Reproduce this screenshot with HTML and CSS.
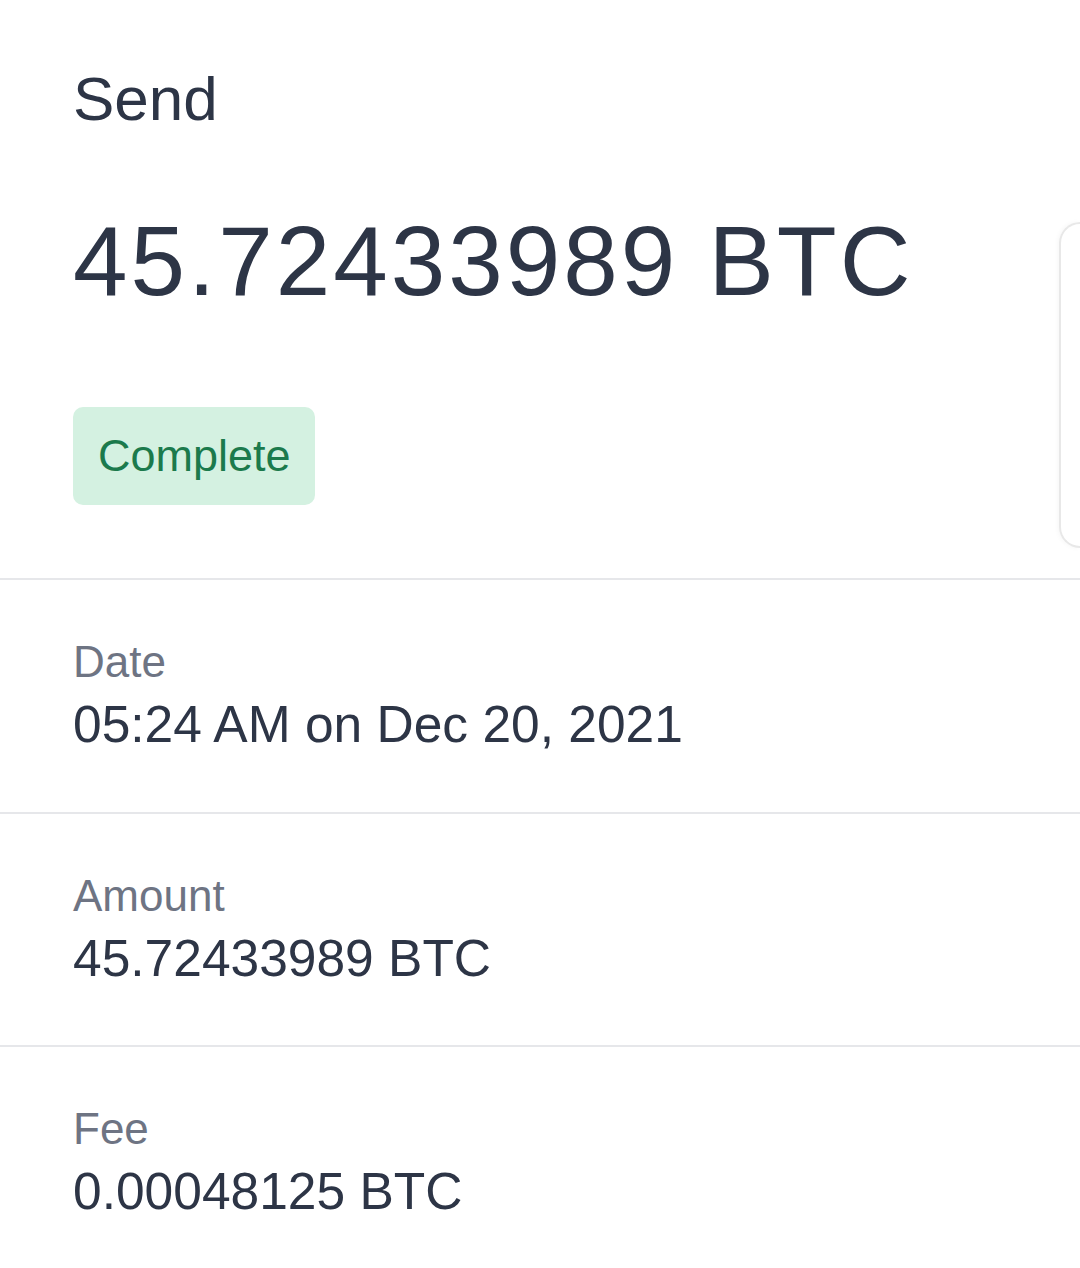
FILE: index.html
```html
<!DOCTYPE html>
<html lang="en">
<head>
  <meta charset="UTF-8" />
  <meta name="viewport" content="width=device-width, initial-scale=1.0" />
  <title>Send</title>
  <link rel="stylesheet" href="styles.css">
</head>
<body>
  <div class="summary">
    <h1 class="kind">Send</h1>
    <div class="big-amount">45.72433989 BTC</div>
    <span class="status">Complete</span>
    <div class="peek-card"></div>
  </div>

  <div class="row">
    <div class="label">Date</div>
    <div class="value">05:24 AM on Dec 20, 2021</div>
  </div>
  <div class="row">
    <div class="label">Amount</div>
    <div class="value">45.72433989 BTC</div>
  </div>
  <div class="row">
    <div class="label">Fee</div>
    <div class="value">0.00048125 BTC</div>
  </div>
</body>
</html>
```

FILE: styles.css
```css
body {
  font-family: "Liberation Sans", Arial, sans-serif;
  background-color: #ffffff;
  color: #2d3546;
  margin: 0;
  overflow: hidden;
}
.summary {
  position: relative;
  padding: 68px 0 73px 73px;
  border-bottom: 2px solid #e6e7ea;
}
.kind {
  margin: 0;
  font-size: 62px;
  font-weight: normal;
  line-height: 1;
}
.big-amount {
  margin-top: 82px;
  font-size: 98px;
  line-height: 1;
  letter-spacing: 3px;
}
.status {
  display: inline-block;
  margin-top: 97px;
  padding: 26px 24px 27px 25px;
  background-color: #d4f1e1;
  color: #1b7a4c;
  font-size: 45px;
  line-height: 1;
  border-radius: 10px;
}
.peek-card {
  position: absolute;
  right: 0;
  top: 222px;
  width: 19px;
  height: 322px;
  border: 2px solid #e8e8e8;
  border-right: none;
  border-radius: 26px 0 0 26px;
  box-shadow: -1px 0 5px rgba(0, 0, 0, 0.04);
}
.row {
  padding: 60px 0 61px 73px;
  border-bottom: 2px solid #e6e7ea;
}
.row:last-child {
  border-bottom: none;
}
.label {
  font-size: 44px;
  line-height: 1;
  color: #6e7483;
}
.value {
  margin-top: 15px;
  font-size: 51.5px;
  line-height: 1;
}
```
